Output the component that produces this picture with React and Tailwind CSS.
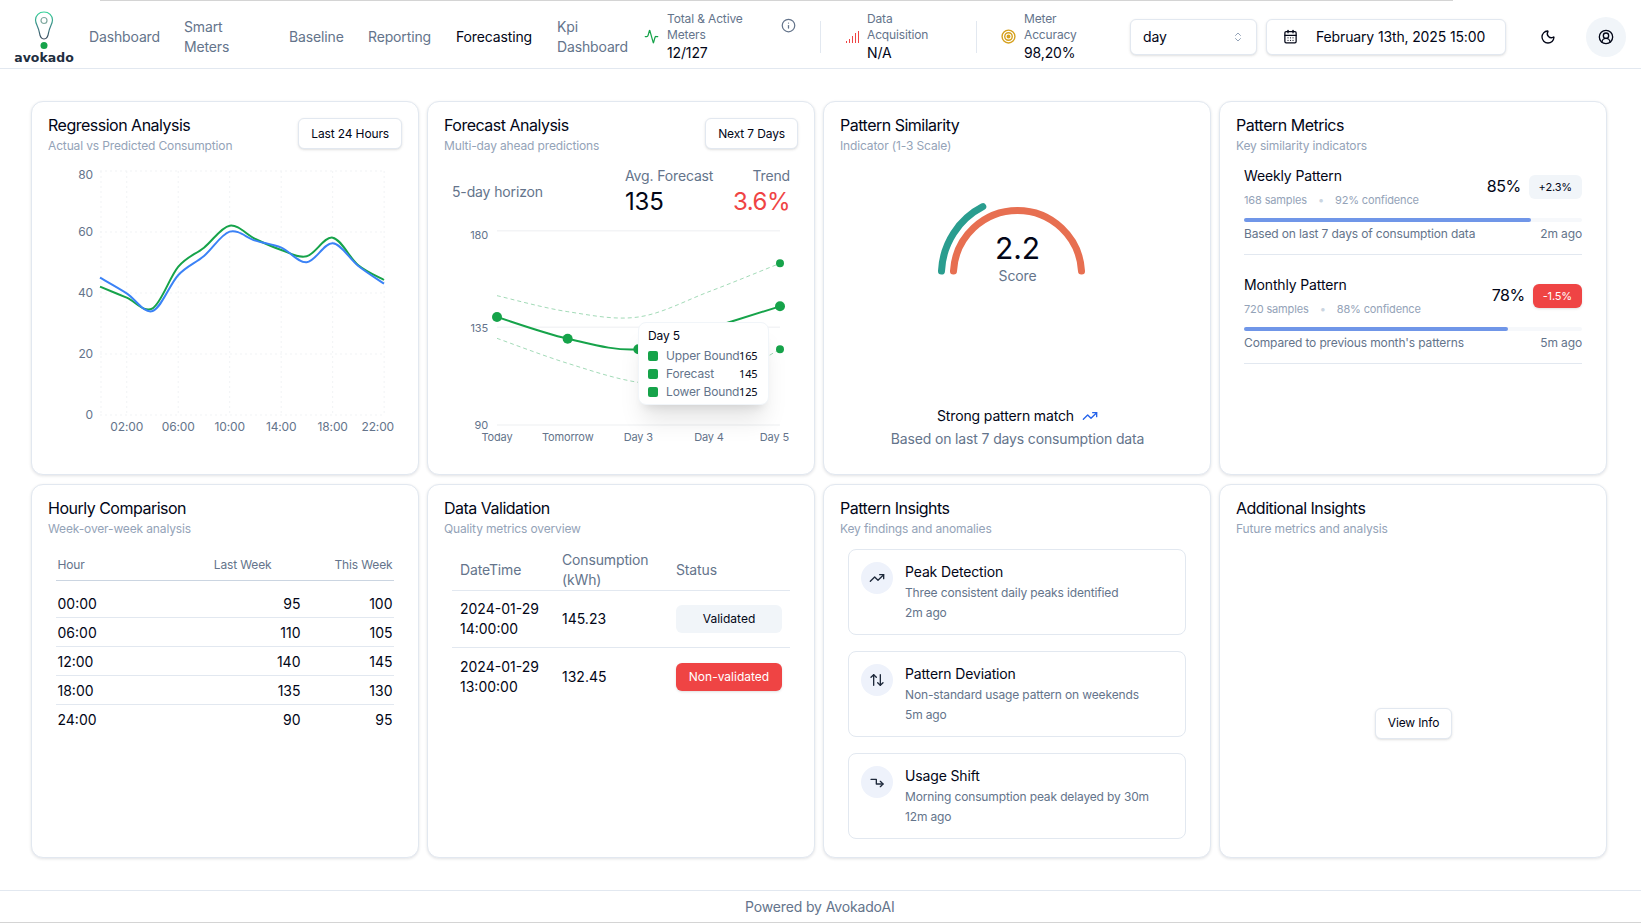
import React from "react";
import { Info, Activity, ChevronsUpDown, CalendarDays, Moon, CircleUserRound, TrendingUp, ArrowUpDown } from "lucide-react";

function smooth(pts) {
  let d = `M${pts[0][0]},${pts[0][1]}`;
  for (let i = 0; i < pts.length - 1; i++) {
    const p0 = pts[i - 1] || pts[i], p1 = pts[i], p2 = pts[i + 1], p3 = pts[i + 2] || p2;
    const t = 1 / 6;
    d += ` C${p1[0] + (p2[0] - p0[0]) * t},${p1[1] + (p2[1] - p0[1]) * t} ${p2[0] - (p3[0] - p1[0]) * t},${p2[1] - (p3[1] - p1[1]) * t} ${p2[0]},${p2[1]}`;
  }
  return d;
}

function Card({ title, subtitle, action, top, children }) {
  return (
    <section className="flex min-h-0 flex-col rounded-[12px] border border-[#e2e8f0] bg-white shadow-[0_1px_3px_rgba(15,23,42,0.12)]">
      <div className={`flex items-start justify-between pl-[16px] pr-[16px] pt-[11px] ${top ? "pb-[1px]" : ""}`}>
        <div>
          <h3 className="text-[16px] leading-[24px] tracking-[-0.5px] text-[#020617]">{title}</h3>
          <p className="mt-[1px] text-[12px] leading-[16px] text-[#94a3b8]">{subtitle}</p>
        </div>
        {action && (
          <button className="mt-[5px] h-[31px] rounded-[6px] border border-[#e2e8f0] bg-white px-[12px] text-[12px] text-[#020617] shadow-sm">{action}</button>
        )}
      </div>
      <div className="flex min-h-0 flex-1 flex-col pl-[1px]">{children}</div>
    </section>
  );
}

function Logo() {
  return (
    <div className="flex w-[60px] flex-col items-center">
      <svg width="20" height="39" viewBox="0 0 20 39" fill="none">
        <defs>
          <linearGradient id="lg" x1="0" y1="0" x2="0" y2="1">
            <stop offset="0" stopColor="#34d399" />
            <stop offset="0.6" stopColor="#3f7f86" />
            <stop offset="1" stopColor="#334155" />
          </linearGradient>
        </defs>
        <path d="M10 1C5 1 1.500 4.500 1.500 9c0 4 3 7 4 13 .5 3.500 2 6 4.500 6s4-2.500 4.500-6c1-6 4-9 4-13 0-4.500-3.500-8-8.500-8Z" stroke="url(#lg)" strokeWidth="1.200" />
        <circle cx="10" cy="9.500" r="3" stroke="#7fa89f" strokeWidth="1.200" />
        <circle cx="10" cy="34.500" r="3.500" fill="#16a34a" />
      </svg>
      <span className="mt-[2px] font-['DejaVu_Sans',sans-serif] text-[12.500px] font-bold leading-[11px] tracking-[0px] text-[#1f2f3f]">avokado</span>
    </div>
  );
}

function NavItem({ children, active, className = "" }) {
  return <a className={`text-[14px] leading-[20px] ${active ? "text-[#020617]" : "text-[#64748b]"} ${className}`}>{children}</a>;
}

function Stat({ label, value, icon, gap }) {
  return (
    <div className={`flex items-center ${gap}`}>
      {icon}
      <div>
        <div className="text-[12px] leading-[16px] text-[#64748b]">{label}</div>
        <div className="text-[14px] leading-[20px] text-[#020617]">{value}</div>
      </div>
    </div>
  );
}

function Header() {
  return (
    <header className="flex h-[65px] shrink-0 items-center border-b border-[#e2e8f0] bg-white pl-[14px] pt-[1px]">
      <Logo />
      <nav className="ml-[15px] flex items-center">
        <NavItem className="w-[95px]">Dashboard</NavItem>
        <NavItem className="w-[105px]">Smart<br />Meters</NavItem>
        <NavItem className="w-[79px]">Baseline</NavItem>
        <NavItem className="w-[88px]">Reporting</NavItem>
        <NavItem active className="w-[101px]">Forecasting</NavItem>
        <NavItem className="w-[86px]">Kpi<br />Dashboard</NavItem>
      </nav>
      <div className="ml-[1px] flex w-[152px] items-start justify-between">
        <Stat
          gap="gap-[8px]"
          label={<>Total &amp; Active<br />Meters</>}
          value="12/127"
          icon={<Activity size={15} className="text-[#16a34a]" />}
        />
        <Info size={15} className="mt-[7px] text-[#64748b]" />
      </div>
      <div className="ml-[24px] h-[32px] w-px bg-[#e2e8f0]" />
      <div className="ml-[24px] w-[131px]">
        <Stat
          gap="gap-[6px]"
          label={<>Data<br />Acquisition</>}
          value="N/A"
          icon={
            <svg width="16" height="14" viewBox="0 0 16 14" className="mt-[1px]">
              <rect x="1" y="11" width="1" height="2" fill="#ef4444" />
              <rect x="4" y="9" width="1" height="4" fill="#ef4444" />
              <rect x="7" y="6" width="1" height="7" fill="#ef4444" />
              <rect x="10" y="3" width="1" height="10" fill="#ef4444" />
              <rect x="13" y="1" width="1" height="12" fill="#ef4444" />
            </svg>
          }
        />
      </div>
      <div className="h-[32px] w-px bg-[#e2e8f0]" />
      <div className="ml-[24px] w-[129px]">
        <Stat
          gap="gap-[8px]"
          label={<>Meter<br />Accuracy</>}
          value="98,20%"
          icon={
            <svg width="15" height="15" viewBox="0 0 14 14" fill="none" stroke="#d6a11e" strokeWidth="1.300">
              <circle cx="7" cy="7" r="6" />
              <circle cx="7" cy="7" r="3.500" />
              <circle cx="7" cy="7" r="1.200" fill="#d6a11e" />
            </svg>
          }
        />
      </div>
      <button className="flex h-[36px] w-[127px] items-center justify-between rounded-[6px] border border-[#e2e8f0] bg-white px-[12px] text-[14px] text-[#020617] shadow-sm">
        day
        <ChevronsUpDown size={12} className="text-[#94a3b8]" />
      </button>
      <button className="ml-[9px] flex h-[36px] w-[240px] items-center gap-[18px] rounded-[6px] border border-[#e2e8f0] bg-white pl-[16px] text-[14px] text-[#020617] shadow-sm">
        <CalendarDays size={15} />
        February 13th, 2025 15:00
      </button>
      <Moon size={16} className="ml-[34px] text-[#020617]" />
      <span className="ml-[30px] flex h-[40px] w-[40px] items-center justify-center rounded-full bg-[#f1f5f9]">
        <CircleUserRound size={16} className="text-[#020617]" />
      </span>
    </header>
  );
}

function Regression() {
  const X = (h) => 68 + h * 12.87;
  const Y = (v) => 260 - v * 3.05;
  const conv = (p) => p.map(([x, y]) => [x / 3 - 13, y / 3 - 60]);
  const actual = conv([[240, 575], [320, 608], [398, 640], [475, 515], [552, 458], [629, 392], [706, 432], [784, 465], [860, 484], [938, 428], [1014, 510], [1092, 555]]);
  const pred = conv([[240, 548], [320, 595], [398, 648], [475, 540], [552, 483], [629, 410], [706, 437], [784, 458], [860, 502], [938, 445], [1014, 512], [1092, 566]]);
  return (
    <svg width="383" height="285" aria-label="regression chart">
      <g stroke="#f1f3f5" strokeDasharray="2 3">
        {[0, 20, 40, 60, 80].map((v) => <line key={v} x1="67" x2="351" y1={Y(v)} y2={Y(v)} />)}
        {[0, 2, 6, 10, 14, 18, 22].map((h) => <line key={h} x1={X(h)} x2={X(h)} y1={Y(80)} y2={Y(0)} />)}
      </g>
      {[[0, 264], [20, Y(20) + 4], [40, Y(40) + 4], [60, Y(60) + 4], [80, 24]].map(([v, by]) => (
        <text key={v} x="60" y={by} textAnchor="end" fontSize="12" fill="#64748b">{v}</text>
      ))}
      {[["02:00", 2], ["06:00", 6], ["10:00", 10], ["14:00", 14], ["18:00", 18]].map(([t, h]) => (
        <text key={t} x={X(h)} y="276" textAnchor="middle" fontSize="12" fill="#64748b">{t}</text>
      ))}
      <text x="361" y="276" textAnchor="end" fontSize="12" fill="#64748b">22:00</text>
      <path d={smooth(actual)} fill="none" stroke="#16a34a" strokeWidth="2" />
      <path d={smooth(pred)} fill="none" stroke="#3b82f6" strokeWidth="2" />
    </svg>
  );
}

function Forecast() {
  const conv = (p) => p.map(([x, y]) => [x / 3 - 4, y / 3 - 123]);
  const f = conv([[216, 666], [428, 731], [640, 763], [852, 700], [1065, 634]]);
  const up = conv([[216, 602], [428, 650], [640, 666], [852, 590], [1065, 505]]);
  const lo = conv([[216, 730], [428, 805], [640, 862], [852, 870], [1065, 763]]);
  return (
    <div className="relative flex-1">
      <div className="flex items-start pl-[23px] pr-[24px] pt-[11px]">
        <span className="mt-[16px] w-[173px] text-[14px] leading-[20px] text-[#64748b]">5-day horizon</span>
        <div>
          <div className="text-[14px] leading-[20px] text-[#64748b]">Avg. Forecast</div>
          <div className="text-[24px] leading-[32px] text-[#020617]">135</div>
        </div>
        <div className="ml-auto text-right">
          <div className="text-[14px] leading-[20px] text-[#64748b]">Trend</div>
          <div className="text-[24px] leading-[32px] tracking-[-0.5px] text-[#ef4444]">3.6%</div>
        </div>
      </div>
      <svg width="383" height="230" aria-label="forecast chart">
        {[[180, 12.700, 21], [135, 109.300, 114], [90, 207, 211]].map(([v, ly, by]) => (
          <g key={v}>
            <line x1="68" x2="351" y1={ly} y2={ly} stroke="#f3f4f6" strokeWidth="1.500" />
            <text x="59" y={by} textAnchor="end" fontSize="11" fill="#64748b">{v}</text>
          </g>
        ))}
        {[["Today", 68], ["Tomorrow", 138.700], ["Day 3", 209.300], ["Day 4", 280]].map(([t, x]) => (
          <text key={t} x={x} y="223" textAnchor="middle" fontSize="11" fill="#64748b">{t}</text>
        ))}
        <text x="360" y="223" textAnchor="end" fontSize="11" fill="#64748b">Day 5</text>
        <path d={smooth(up)} fill="none" stroke="#16a34a" strokeOpacity="0.4" strokeDasharray="4 3" />
        <path d={smooth(lo)} fill="none" stroke="#16a34a" strokeOpacity="0.4" strokeDasharray="4 3" />
        <path d={smooth(f)} fill="none" stroke="#16a34a" strokeWidth="2" />
        {[f[0], f[1], f[2], f[4]].map(([x, y]) => <circle key={x} cx={x} cy={y} r="5" fill="#16a34a" />)}
        <circle cx={up[4][0]} cy={up[4][1]} r="4" fill="#16a34a" />
        <circle cx={lo[4][0]} cy={lo[4][1]} r="4" fill="#16a34a" />
      </svg>
      <div className="absolute left-[209px] top-[167px] h-[83px] w-[131px] rounded-[8px] border border-[#f1f5f9] bg-white pl-[9px] pt-[4px] text-[12px] shadow-xl">
        <div className="mb-[2px] leading-[18px] text-[#020617]">Day 5</div>
        {[["Upper Bound", 165], ["Forecast", 145], ["Lower Bound", 125]].map(([k, v]) => (
          <div key={k} className="flex h-[18px] items-center">
            <span className="mr-[8px] h-[10px] w-[10px] rounded-[2px] bg-[#16a34a]" />
            <span className="w-[73px] whitespace-nowrap text-[#64748b]">{k}</span>
            <span className="font-['Noto_Sans',sans-serif] text-[11px] text-[#020617]">{v}</span>
          </div>
        ))}
      </div>
    </div>
  );
}

function Gauge() {
  return (
    <div className="flex flex-1 flex-col items-center">
      <div className="relative mt-[45px] h-[90px] w-[160px]">
        <svg width="160" height="90" viewBox="0 0 160 90" fill="none" strokeLinecap="round" strokeWidth="7" className="overflow-visible" aria-label="gauge">
          <path d="M3.500,71 A76.300,76.300 0 0 1 44.800,6.700" stroke="#2a9d8f" />
          <path d="M15.500,71 A64.100,64.100 0 0 1 143.500,71" stroke="#e76f51" />
        </svg>
        <div className="absolute inset-x-0 top-[30px] text-center text-[30px] leading-[36px] text-[#020617]">2.2</div>
        <div className="absolute inset-x-0 top-[66px] text-center text-[14px] leading-[20px] text-[#64748b]">Score</div>
      </div>
      <div className="mt-auto flex items-center gap-[8px] text-[14px] leading-[20px] text-[#020617]">
        Strong pattern match <TrendingUp size={16} className="text-[#2563eb]" />
      </div>
      <div className="mb-[25px] mt-[3px] text-[14px] leading-[20px] text-[#64748b]">Based on last 7 days consumption data</div>
    </div>
  );
}

function Metric({ name, samples, conf, pct, delta, neg, w, note, ago }) {
  return (
    <div className="border-b border-[#e2e8f0] pb-[10px]">
      <div className="flex items-center justify-between">
        <div>
          <div className="text-[14px] leading-[20px] text-[#020617]">{name}</div>
          <div className="mt-[6px] flex items-center text-[11px] leading-[16px] text-[#94a3b8]">
            <span>{samples}</span><span className="mx-[11px] text-[#cbd5e1]">•</span><span>{conf}</span>
          </div>
        </div>
        <div className="flex items-center gap-[8px]">
          <span className="mb-[2px] text-[16px] tracking-[-0.5px] text-[#020617]">{pct}</span>
          <span className={`flex h-[24px] items-center rounded-[6px] px-[10px] text-[11px] ${neg ? "bg-[#ef4444] text-white shadow-sm" : "bg-[#f1f5f9] text-[#020617]"}`}>{delta}</span>
        </div>
      </div>
      <div className="mt-[10px] h-[4px] w-full rounded-full bg-[#f6f8fb]">
        <div className="h-[4px] rounded-full bg-[#7096e8]" style={{ width: w }} />
      </div>
      <div className="mt-[2px] flex justify-between text-[12px] leading-[20px] text-[#64748b]">
        <span>{note}</span><span>{ago}</span>
      </div>
    </div>
  );
}

function Hourly() {
  const rows = [["00:00", 95, 100], ["06:00", 110, 105], ["12:00", 140, 145], ["18:00", 135, 130], ["24:00", 90, 95]];
  return (
    <div className="pl-[23px] pr-[24px] pt-[12px]">
      <div className="flex h-[32px] items-center border-b border-[#cbd5e1] px-[1.500px] text-[12px] text-[#64748b]">
        <span className="flex-1">Hour</span>
        <span className="w-[100px] text-right">Last Week</span>
        <span className="w-[121px] text-right">This Week</span>
      </div>
      <div className="pt-[8px] tracking-normal">
        {rows.map(([h, a, b], i) => (
          <div key={h} className={`flex h-[29px] items-center px-[1.500px] text-[14px] text-[#020617] ${i < 4 ? "border-b border-[#e2e8f0]" : ""}`}>
            <span className="flex-1">{h}</span>
            <span className="w-[100px] text-right">{a}</span>
            <span className="w-[92px] text-right">{b}</span>
          </div>
        ))}
      </div>
    </div>
  );
}

function Validation() {
  const rows = [
    ["2024-01-29", "14:00:00", "145.23", "Validated", false],
    ["2024-01-29", "13:00:00", "132.45", "Non-validated", true],
  ];
  return (
    <div className="pl-[23px] pr-[24px] pt-[13px]">
      <div className="flex h-[41px] items-center border-b border-[#e2e8f0] text-[14px] leading-[20px] text-[#64748b]">
        <span className="w-[110px] pl-[8px]">DateTime</span>
        <span className="w-[114px]">Consumption<br />(kWh)</span>
        <span>Status</span>
      </div>
      {rows.map(([d, t, v, s, bad]) => (
        <div key={t} className="flex h-[57px] items-center border-b border-[#e2e8f0] text-[14px] leading-[20px] tracking-normal text-[#020617] last:border-b-0">
          <span className="w-[110px] pl-[8px]">{d}<br />{t}</span>
          <span className="w-[114px]">{v}</span>
          <span className={`flex h-[28px] w-[106px] items-center justify-center rounded-[6px] text-[12px] ${bad ? "bg-[#ef4444] text-white shadow-sm" : "bg-[#f1f5f9] text-[#020617]"}`}>{s}</span>
        </div>
      ))}
    </div>
  );
}

function ShiftIcon() {
  return (
    <svg width="16" height="16" viewBox="0 0 24 24" fill="none" stroke="currentColor" strokeWidth="2" strokeLinecap="round" strokeLinejoin="round">
      <path d="M3 8h8v7h10" />
      <path d="m17 11 4 4-4 4" />
    </svg>
  );
}

function Insights() {
  const items = [
    [<TrendingUp size={16} />, "Peak Detection", "Three consistent daily peaks identified", "2m ago"],
    [<ArrowUpDown size={16} />, "Pattern Deviation", "Non-standard usage pattern on weekends", "5m ago"],
    [<ShiftIcon />, "Usage Shift", "Morning consumption peak delayed by 30m", "12m ago"],
  ];
  return (
    <div className="flex flex-col gap-[16px] pl-[23px] pr-[24px] pt-[12px]">
      {items.map(([icon, t, d, a]) => (
        <div key={t} className="flex h-[86px] gap-[12px] rounded-[8px] border border-[#e2e8f0] bg-white pl-[12px] pt-[12px]">
          <span className="flex h-[32px] w-[32px] items-center justify-center rounded-full bg-[#eef2fb] text-[#1e293b]">{icon}</span>
          <div>
            <div className="text-[14px] leading-[20px] text-[#020617]">{t}</div>
            <div className="mt-[1px] text-[12px] leading-[20px] text-[#64748b]">{d}</div>
            <div className="text-[12px] leading-[20px] text-[#64748b]">{a}</div>
          </div>
        </div>
      ))}
    </div>
  );
}

export default function App() {
  return (
    <div className="flex h-[923px] w-[1641px] flex-col overflow-hidden bg-white font-['Inter','Liberation_Sans',sans-serif] tracking-[-0.14px]">
      <div className="h-[4px] shrink-0 bg-white">
        <div className="ml-[100px] h-[1px] w-[1353px] bg-[#d4d4d4]" />
      </div>
      <Header />
      <main className="grid min-h-0 flex-1 grid-cols-4 grid-rows-[374px_374px] gap-x-[8px] gap-y-[9px] pl-[31px] pr-[34px] pt-[32px]">
        <Card top title="Regression Analysis" subtitle="Actual vs Predicted Consumption" action="Last 24 Hours"><Regression /></Card>
        <Card top title="Forecast Analysis" subtitle="Multi-day ahead predictions" action="Next 7 Days"><Forecast /></Card>
        <Card top title="Pattern Similarity" subtitle="Indicator (1-3 Scale)"><Gauge /></Card>
        <Card top title="Pattern Metrics" subtitle="Key similarity indicators">
          <div className="flex flex-col gap-[20px] pl-[23px] pr-[24px] pt-[11px]">
            <Metric name="Weekly Pattern" samples="168 samples" conf="92% confidence" pct="85%" delta="+2.3%" w="85%" note="Based on last 7 days of consumption data" ago="2m ago" />
            <Metric name="Monthly Pattern" samples="720 samples" conf="88% confidence" pct="78%" delta="-1.5%" neg w="78%" note="Compared to previous month's patterns" ago="5m ago" />
          </div>
        </Card>
        <Card title="Hourly Comparison" subtitle="Week-over-week analysis"><Hourly /></Card>
        <Card title="Data Validation" subtitle="Quality metrics overview"><Validation /></Card>
        <Card title="Pattern Insights" subtitle="Key findings and anomalies"><Insights /></Card>
        <Card title="Additional Insights" subtitle="Future metrics and analysis">
          <div className="flex flex-1 items-center justify-center pt-[52px]">
            <button className="h-[31px] rounded-[6px] border border-[#e2e8f0] bg-white px-[12px] text-[12px] text-[#020617] shadow-sm">View Info</button>
          </div>
        </Card>
      </main>
      <footer className="flex h-[33px] shrink-0 items-center border-y border-t-[#e2e8f0] border-b-[#d4d4d4] pl-[745px] text-[14px] text-[#64748b]">Powered by AvokadoAI</footer>
    </div>
  );
}
